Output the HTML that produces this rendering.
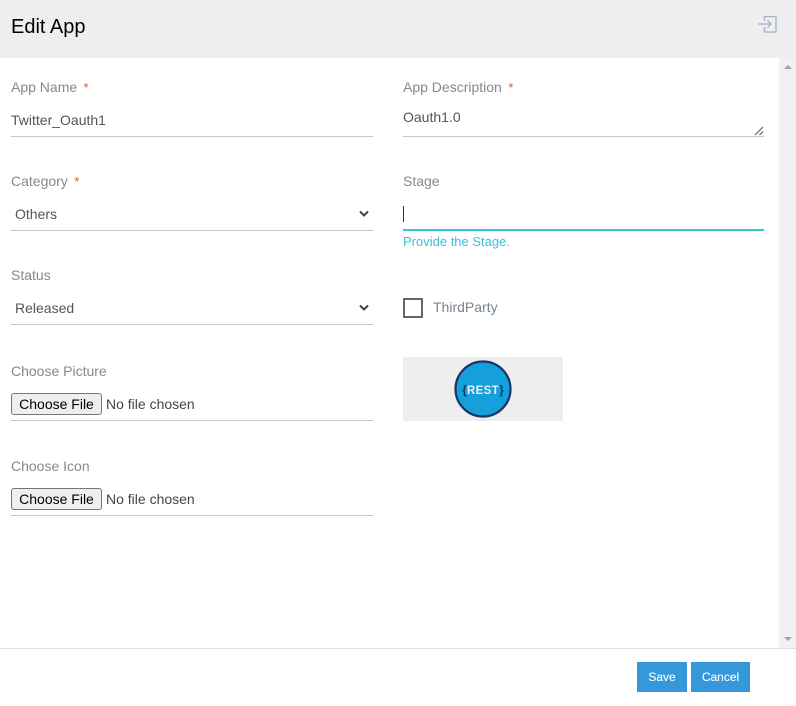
<!DOCTYPE html>
<html>
<head>
<meta charset="utf-8">
<title>Edit App</title>
<style>
html,body{margin:0;padding:0;background:#fff;}
body{width:796px;height:706px;position:relative;overflow:hidden;font-family:"Liberation Sans",Arial,sans-serif;font-size:14px;}
.a{position:absolute;white-space:nowrap;line-height:20px;}
.l{color:#888;}
.v{color:#555;}
.s{color:#f4511e;font-size:13px;margin-left:2.5px;}
.u{position:absolute;height:1px;background:#bfc8d6;width:362px;}
.btn{position:absolute;box-sizing:border-box;left:11px;width:91px;height:22px;border:1px solid #767676;border-radius:3px;background:#efefef;color:#000;font:14px/20px "Liberation Sans",Arial,sans-serif;text-align:center;}
.nf{color:#444;}
.pb{position:absolute;top:662px;height:30px;background:#3498db;color:#fff;font-size:12px;line-height:30px;text-align:center;font-weight:400;-webkit-text-stroke:.1px #fff;}
</style>
</head>
<body>
<div style="position:absolute;left:0;top:0;width:796px;height:58px;background:#eee;"></div>
<div class="a" style="left:11px;top:15px;font-size:20px;line-height:24px;color:#000;">Edit App</div>
<svg style="position:absolute;left:757px;top:14px;" width="22" height="22" viewBox="0 0 22 22" fill="none" stroke="#a3b1c4" stroke-width="1.3">
<path d="M7.5 7V2.6H19V18H7.5V13"/><path d="M1.5 10H14"/><path d="M10.5 6.5L14 10L10.5 13.5"/>
</svg>

<div style="position:absolute;left:779px;top:58px;width:17px;height:590px;background:#f1f1f1;"></div>
<div style="position:absolute;left:784px;top:65px;width:0;height:0;border-left:4px solid transparent;border-right:4px solid transparent;border-bottom:4px solid #a3a3a3;"></div>
<div style="position:absolute;left:784px;top:637px;width:0;height:0;border-left:4px solid transparent;border-right:4px solid transparent;border-top:4px solid #a3a3a3;"></div>

<div class="a l" style="left:11px;top:77px;">App Name <span class="s">*</span></div>
<div class="a v" style="left:11px;top:110px;">Twitter_Oauth1</div>
<div class="u" style="left:11px;top:136px;"></div>

<div class="a l" style="left:403px;top:77px;">App Description <span class="s">*</span></div>
<div class="a v" style="left:403px;top:107px;">Oauth1.0</div>
<div class="u" style="left:403px;top:136px;width:361px;"></div>
<svg style="position:absolute;left:754px;top:126px;" width="10" height="10" viewBox="0 0 10 10" fill="none" stroke="#555" stroke-width="1"><path d="M1 9L9 1M5.5 9L9 5.5"/></svg>

<div class="a l" style="left:11px;top:171px;">Category <span class="s">*</span></div>
<div class="a v" style="left:15px;top:204px;">Others</div>
<svg style="position:absolute;left:358px;top:210px;" width="12" height="8" viewBox="0 0 12 8" fill="none" stroke="#444" stroke-width="2"><path d="M2 1.5L6 5.5L10 1.5"/></svg>
<div class="u" style="left:11px;top:230px;"></div>

<div class="a l" style="left:403px;top:171px;">Stage</div>
<div style="position:absolute;left:403px;top:206px;width:1px;height:16px;background:#333;"></div>
<div style="position:absolute;left:403px;top:229px;width:361px;height:2px;background:#36c3d6;"></div>
<div class="a" style="left:403px;top:232px;color:#36c3d6;font-size:13px;line-height:20px;">Provide the Stage.</div>

<div class="a l" style="left:11px;top:265px;">Status</div>
<div class="a v" style="left:15px;top:298px;">Released</div>
<svg style="position:absolute;left:358px;top:304px;" width="12" height="8" viewBox="0 0 12 8" fill="none" stroke="#444" stroke-width="2"><path d="M2 1.5L6 5.5L10 1.5"/></svg>
<div class="u" style="left:11px;top:324px;"></div>

<div style="position:absolute;box-sizing:border-box;left:403px;top:298px;width:20px;height:20px;border:2px solid #666;"></div>
<div class="a" style="left:433px;top:297px;color:#78848f;">ThirdParty</div>

<div class="a l" style="left:11px;top:361px;">Choose Picture</div>
<div class="btn" style="top:393px;">Choose File</div>
<div class="a nf" style="left:106px;top:394px;">No file chosen</div>
<div class="u" style="left:11px;top:420px;"></div>

<div style="position:absolute;left:403px;top:357px;width:160px;height:64px;background:#eee;"></div>
<svg style="position:absolute;left:454px;top:360px;" width="58" height="58" viewBox="0 0 58 58">
<circle cx="29" cy="29" r="27.5" fill="#159fdb" stroke="#1c3567" stroke-width="2.2"/>
<text x="29" y="34" text-anchor="middle" font-family="Liberation Sans, Arial, sans-serif" font-size="11.5" font-weight="700" letter-spacing=".4" fill="#e4f3fb">REST</text>
<text x="10.5" y="34" text-anchor="middle" font-family="Liberation Sans, Arial, sans-serif" font-size="11.5" font-weight="700" fill="#1c3567">{</text>
<text x="47.5" y="34" text-anchor="middle" font-family="Liberation Sans, Arial, sans-serif" font-size="11.5" font-weight="700" fill="#1c3567">}</text>
</svg>

<div class="a l" style="left:11px;top:456px;">Choose Icon</div>
<div class="btn" style="top:488px;">Choose File</div>
<div class="a nf" style="left:106px;top:489px;">No file chosen</div>
<div class="u" style="left:11px;top:515px;"></div>

<div style="position:absolute;left:0;top:648px;width:796px;height:1px;background:#ddd;"></div>
<div class="pb" style="left:637px;width:50px;">Save</div>
<div class="pb" style="left:691px;width:59px;">Cancel</div>
</body>
</html>
